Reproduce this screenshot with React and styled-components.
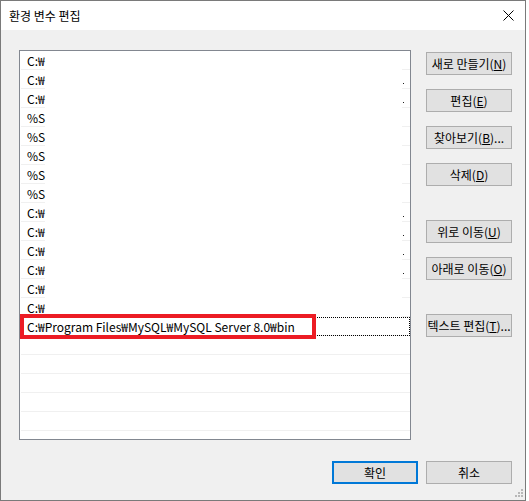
import styled, { createGlobalStyle } from "styled-components"

const GlobalStyle = createGlobalStyle`
    body {
        margin: 0;
        background: #ffffff;
        font-family: "Noto Sans CJK KR", "Noto Sans", sans-serif;
        font-size: 12px;
        color: #000;
    }
`

const paths = [
    { text: "C:₩", dot: false },
    { text: "C:₩", dot: true },
    { text: "C:₩", dot: true },
    { text: "%S", dot: false },
    { text: "%S", dot: false },
    { text: "%S", dot: false },
    { text: "%S", dot: false },
    { text: "%S", dot: false },
    { text: "C:₩", dot: true },
    { text: "C:₩", dot: true },
    { text: "C:₩", dot: true },
    { text: "C:₩", dot: true },
    { text: "C:₩", dot: false },
    { text: "C:₩", dot: false },
]

export default function App() {
    return (
        <>
            <GlobalStyle />
            <Window>
                <TitleBar>
                    <Title>환경 변수 편집</Title>
                    <CloseIcon width="11" height="11" viewBox="0 0 11 11">
                        <path d="M0.5 0.5 L10.5 10.5 M10.5 0.5 L0.5 10.5" stroke="#000" strokeWidth="1" />
                    </CloseIcon>
                </TitleBar>
                <Body>
                    <Main>
                        <List>
                            {paths.map((p, i) => (
                                <Row key={i}>
                                    <LeftCell>{p.text}</LeftCell>
                                    <Hidden />
                                    <RightCell>{p.dot && <Dot />}</RightCell>
                                </Row>
                            ))}
                            <FullRow $focused>
                                <RowText>C:₩Program Files₩MySQL₩MySQL Server 8.0₩bin</RowText>
                                <Highlight />
                            </FullRow>
                            {Array.from({ length: 7 }).map((_, i) => (
                                <FullRow key={i} />
                            ))}
                        </List>
                        <ButtonStack>
                            <Button>새로 만들기(<u>N</u>)</Button>
                            <Button>편집(<u>E</u>)</Button>
                            <Button>찾아보기(<u>B</u>)...</Button>
                            <Button>삭제(<u>D</u>)</Button>
                            <Button $spaced>위로 이동(<u>U</u>)</Button>
                            <Button>아래로 이동(<u>O</u>)</Button>
                            <Button $spaced>텍스트 편집(<u>T</u>)...</Button>
                        </ButtonStack>
                    </Main>
                    <Footer>
                        <Button $primary>확인</Button>
                        <Button>취소</Button>
                    </Footer>
                </Body>
                <Grip width="9" height="9" viewBox="0 0 9 9">
                    <rect x="6" y="0" width="2" height="2" fill="#b8b8b8" />
                    <rect x="3" y="3" width="2" height="2" fill="#b8b8b8" />
                    <rect x="6" y="3" width="2" height="2" fill="#b8b8b8" />
                    <rect x="0" y="6" width="2" height="2" fill="#b8b8b8" />
                    <rect x="3" y="6" width="2" height="2" fill="#b8b8b8" />
                    <rect x="6" y="6" width="2" height="2" fill="#b8b8b8" />
                </Grip>
            </Window>
        </>
    )
}

const Window = styled.div`
    position: relative;
    width: 526px;
    height: 501px;
    box-sizing: border-box;
    border: 1px solid #7a7a7a;
    background: #f0f0f0;
    display: flex;
    flex-direction: column;
`

const TitleBar = styled.div`
    height: 29px;
    background: #ffffff;
    display: flex;
    align-items: center;
    justify-content: space-between;
    padding: 0 11px 0 8px;
`

const Title = styled.span`
    font-size: 12px;
    line-height: 16px;
`

const CloseIcon = styled.svg`
    display: block;
`

const Body = styled.div`
    padding: 20px 13px 0 18px;
    display: flex;
    flex-direction: column;
`

const Main = styled.div`
    display: flex;
    gap: 15px;
`

const List = styled.div`
    width: 392px;
    height: 390px;
    box-sizing: border-box;
    border: 1px solid #828790;
    background: #ffffff;
    padding-left: 1px;
    overflow: hidden;
`

const Row = styled.div`
    display: flex;
    height: 19px;
`

const LeftCell = styled.div`
    width: 24px;
    box-sizing: border-box;
    padding: 1px 0 0 6px;
    line-height: 17px;
    white-space: nowrap;
    border-bottom: 1px solid #f0f0f0;
`

const Hidden = styled.div`
    flex: 1;
`

const RightCell = styled.div`
    width: 8px;
    box-sizing: border-box;
    border-bottom: 1px solid #f0f0f0;
    display: flex;
    align-items: flex-end;
    padding: 0 0 4px 1px;
`

const Dot = styled.span`
    width: 1px;
    height: 1px;
    background: #202020;
`

const FullRow = styled.div`
    position: relative;
    height: 19px;
    box-sizing: border-box;
    border-bottom: 1px solid #f0f0f0;
    outline: ${p => p.$focused ? "1px dotted #000" : "none"};
    outline-offset: -1px;
`

const RowText = styled.div`
    padding: 1px 0 0 6px;
    line-height: 17px;
    white-space: nowrap;
`

const Highlight = styled.div`
    position: absolute;
    left: -1px;
    top: -3px;
    width: 296px;
    height: 25px;
    box-sizing: border-box;
    border: 4px solid #ec1c24;
`

const ButtonStack = styled.div`
    display: flex;
    flex-direction: column;
    gap: 14px;
    padding-top: 2px;
`

const Button = styled.div`
    width: 86px;
    height: 23px;
    box-sizing: border-box;
    border: ${p => p.$primary ? "2px solid #0078d7" : "1px solid #adadad"};
    background: #e1e1e1;
    display: flex;
    align-items: center;
    justify-content: center;
    white-space: nowrap;
    font-size: 12px;
    margin-top: ${p => p.$spaced ? "20px" : "0"};
    u {
        text-underline-offset: 1px;
    }
`

const Footer = styled.div`
    display: flex;
    justify-content: flex-end;
    gap: 8px;
    margin-top: 21px;
`

const Grip = styled.svg`
    position: absolute;
    right: 1px;
    bottom: 2px;
`
